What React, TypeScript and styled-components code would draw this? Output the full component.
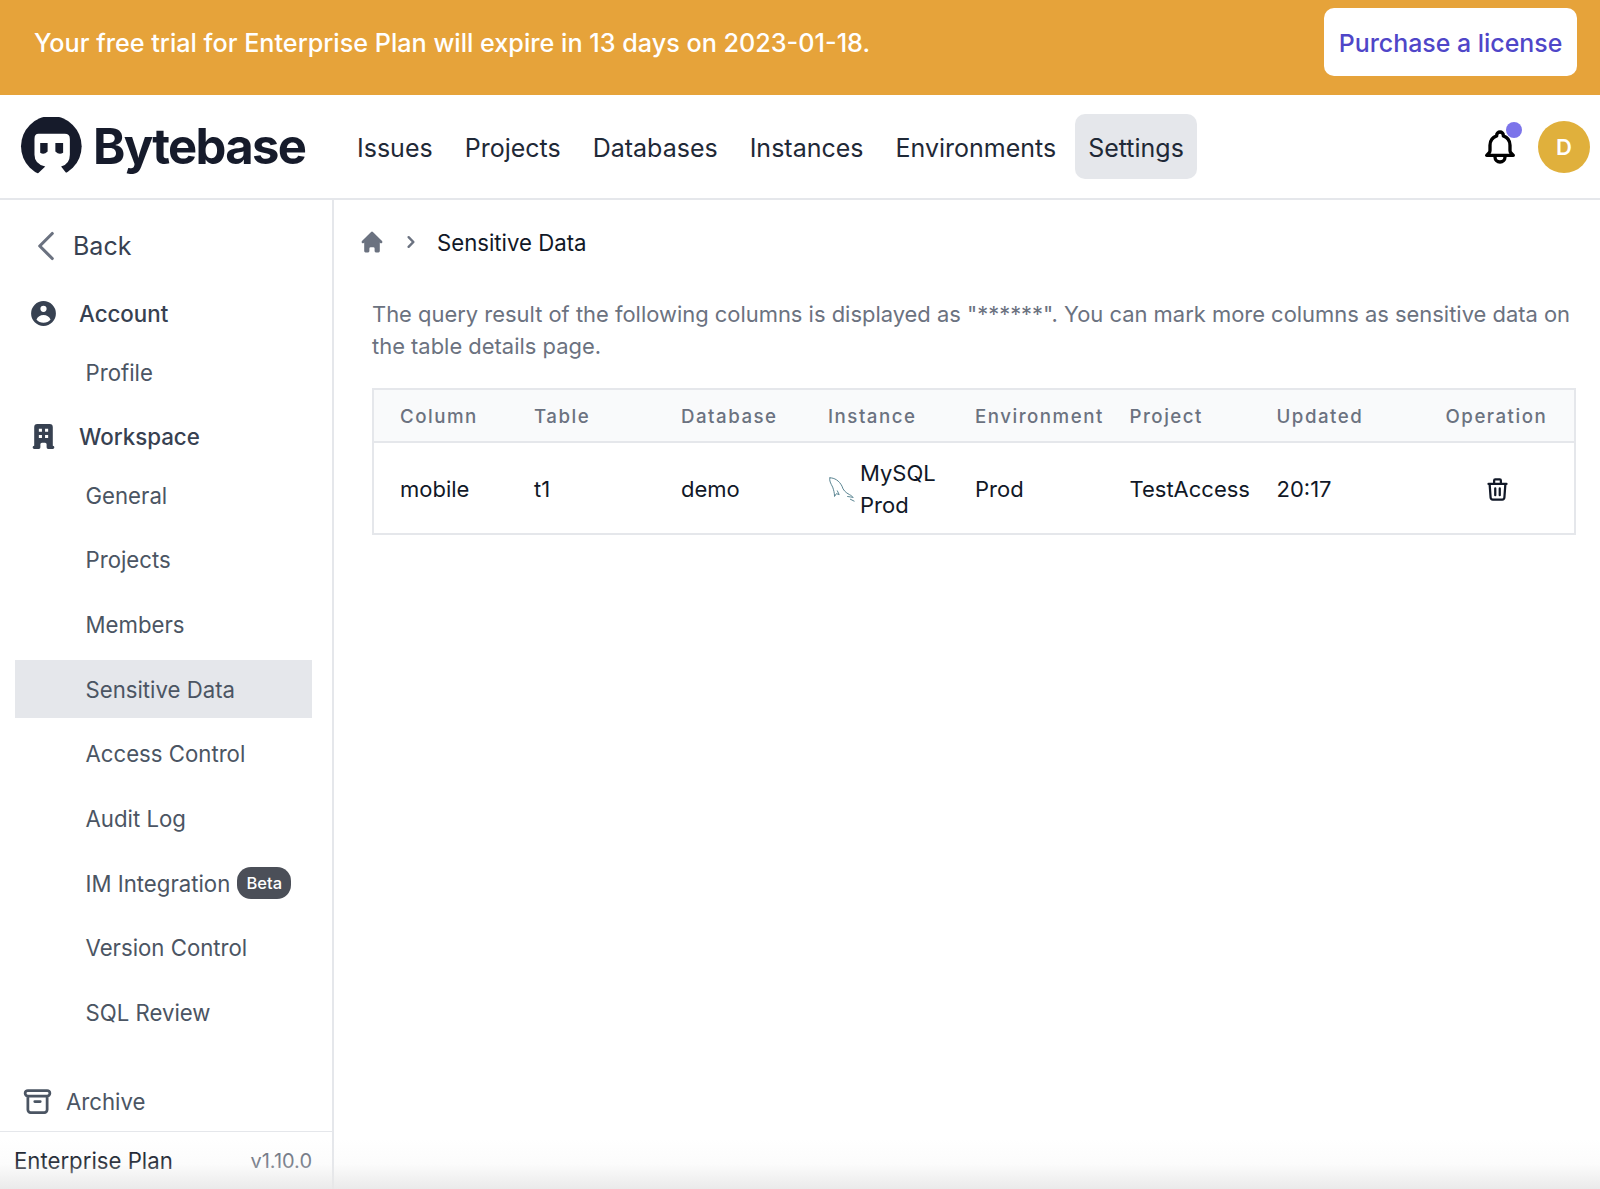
import React from 'react';
import styled, { createGlobalStyle } from 'styled-components';
import { ChevronLeft } from 'lucide-react';
import {
  HiUserCircle,
  HiOfficeBuilding,
  HiHome,
  HiChevronRight,
  HiOutlineBell,
  HiOutlineTrash,
  HiOutlineArchive,
} from 'react-icons/hi';

const navItems = ['Issues', 'Projects', 'Databases', 'Instances', 'Environments', 'Settings'];
const workspaceItems = ['General', 'Projects', 'Members', 'Sensitive Data', 'Access Control', 'Audit Log', 'IM Integration', 'Version Control', 'SQL Review'];
const columns = ['Column', 'Table', 'Database', 'Instance', 'Environment', 'Project', 'Updated', 'Operation'];

const App: React.FC = () => {
  return (
    <Page>
      <GlobalStyle />
      <Banner>
        <BannerText>Your free trial for Enterprise Plan will expire in 13 days on 2023-01-18.</BannerText>
        <PurchaseButton>Purchase a license</PurchaseButton>
      </Banner>
      <Header>
        <Logo>
          <svg width="64" height="60" viewBox="60 78 190 178">
            <circle cx="153" cy="165" r="90" fill="#161b2b" />
            <path d="M115 128H193Q208 128 208 143V190Q208 218 182 225L208 258H100L135 225Q103 218 103 190V143Q103 128 115 128Z" fill="#fff" />
            <path d="M120 155H142V180Q131 192 120 184Z" fill="#161b2b" />
            <path d="M165 155H188V184Q176 192 165 180Z" fill="#161b2b" />
          </svg>
          <LogoText>Bytebase</LogoText>
        </Logo>
        <Nav>
          {navItems.map((item) => (
            <NavItem key={item} $active={item === 'Settings'}>{item}</NavItem>
          ))}
        </Nav>
        <HeaderRight>
          <BellWrap>
            <HiOutlineBell size={40} />
            <BellDot />
          </BellWrap>
          <Avatar>D</Avatar>
        </HeaderRight>
      </Header>
      <Body>
        <Sidebar>
          <BackRow>
            <ChevronLeft size={50} color="#6b7280" strokeWidth={1.5} />
            <span>Back</span>
          </BackRow>
          <GroupRow $top={21}>
            <HiUserCircle size={31} color="#374151" />
            <span>Account</span>
          </GroupRow>
          <SubList $top={7}>
            <SubItem>Profile</SubItem>
          </SubList>
          <GroupRow $top={12}>
            <HiOfficeBuilding size={31} color="#374151" />
            <span>Workspace</span>
          </GroupRow>
          <SubList $top={7}>
            {workspaceItems.map((item) => (
              <SubItem key={item} $active={item === 'Sensitive Data'}>
                {item}
                {item === 'IM Integration' && <BetaBadge>Beta</BetaBadge>}
              </SubItem>
            ))}
          </SubList>
          <ArchiveRow>
            <HiOutlineArchive size={33} color="#4b5563" />
            <span>Archive</span>
          </ArchiveRow>
          <SidebarFooter>
            <PlanName>Enterprise Plan</PlanName>
            <Version>v1.10.0</Version>
          </SidebarFooter>
        </Sidebar>
        <Main>
          <Breadcrumb>
            <HiHome size={26} color="#6b7280" />
            <HiChevronRight size={24} color="#6b7280" />
            <Crumb>Sensitive Data</Crumb>
          </Breadcrumb>
          <Description>
            The query result of the following columns is displayed as "******". You can mark more columns as sensitive data on the table details page.
          </Description>
          <DataTable>
            <HeadRow>
              {columns.map((column) => (
                <HeadCell key={column}>{column}</HeadCell>
              ))}
            </HeadRow>
            <BodyRow>
              <BodyCell>mobile</BodyCell>
              <BodyCell>t1</BodyCell>
              <BodyCell>demo</BodyCell>
              <InstanceCell>
                <svg width="28" height="28" viewBox="0 0 30 28" fill="none" stroke="#4f7c8a" strokeWidth="1" strokeLinecap="round" strokeLinejoin="round">
                  <path d="M2 2C7 2 12 5 15 11C16 15 19 18 23 20C25 21 26 22 27 23C25 23 23 22 21 22" />
                  <path d="M2 2C1 5 3 8 5 12C6 15 7 18 7 22L9 19L12 20L10 16" />
                  <path d="M24 25L28 27" />
                </svg>
                <span>MySQL<br />Prod</span>
              </InstanceCell>
              <BodyCell>Prod</BodyCell>
              <BodyCell>TestAccess</BodyCell>
              <BodyCell>20:17</BodyCell>
              <TrashCell>
                <HiOutlineTrash size={27} color="#111827" />
              </TrashCell>
            </BodyRow>
          </DataTable>
        </Main>
      </Body>
      <BottomFade />
    </Page>
  );
};

export default App;

const GlobalStyle = createGlobalStyle`
  html, body {
    margin: 0;
    padding: 0;
    background: #fff;
    font-family: Inter, "Liberation Sans", sans-serif;
  }
`;

const Page = styled.div`
  position: relative;
  display: flex;
  flex-direction: column;
  width: 1600px;
  height: 1189px;
  overflow: hidden;
`;

const Banner = styled.div`
  display: flex;
  align-items: center;
  justify-content: space-between;
  box-sizing: border-box;
  height: 95px;
  padding: 0 23px 11px 34px;
  background: #e6a33a;
`;

const BannerText = styled.div`
  margin-top: 2px;
  color: #fff;
  font-size: 25.2px;
  font-weight: 500;
`;

const PurchaseButton = styled.div`
  display: flex;
  align-items: center;
  justify-content: center;
  box-sizing: border-box;
  width: 253px;
  height: 68px;
  padding-top: 2px;
  border-radius: 10px;
  background: #fff;
  color: #4f46c8;
  font-size: 24.9px;
  font-weight: 500;
`;

const Header = styled.div`
  display: flex;
  align-items: center;
  box-sizing: border-box;
  height: 105px;
  padding: 0 10px 0 20px;
  border-bottom: 2px solid #e5e7eb;
`;

const Logo = styled.div`
  display: flex;
  align-items: center;
  gap: 9px;
  width: 323.5px;
`;

const LogoText = styled.span`
  color: #161b2b;
  font-size: 49px;
  font-weight: 700;
  letter-spacing: -1.7px;
`;

const Nav = styled.nav`
  display: flex;
  gap: 5px;
`;

const NavItem = styled.div<{ $active?: boolean }>`
  display: flex;
  align-items: center;
  box-sizing: border-box;
  height: 65px;
  padding: 2px 13.5px 0;
  border-radius: 10px;
  background: ${(p) => (p.$active ? '#e5e7eb' : 'transparent')};
  color: #1f2937;
  font-size: 25px;
`;

const HeaderRight = styled.div`
  display: flex;
  align-items: center;
  gap: 18px;
  margin-left: auto;
`;

const BellWrap = styled.div`
  position: relative;
  display: flex;
  color: #000;
`;

const BellDot = styled.span`
  position: absolute;
  top: -5px;
  right: -2px;
  width: 16px;
  height: 16px;
  border-radius: 50%;
  background: #7c74ea;
`;

const Avatar = styled.div`
  display: flex;
  align-items: center;
  justify-content: center;
  width: 52px;
  height: 52px;
  border-radius: 50%;
  background: #e0b03c;
  color: #fff;
  font-size: 22px;
  font-weight: 600;
`;

const Body = styled.div`
  display: flex;
  flex: 1;
  min-height: 0;
`;

const Sidebar = styled.aside`
  display: flex;
  flex-direction: column;
  box-sizing: border-box;
  width: 334px;
  padding-top: 23px;
  border-right: 2px solid #e5e7eb;
`;

const BackRow = styled.div`
  display: flex;
  align-items: center;
  gap: 2px;
  height: 46px;
  padding-left: 21px;
  color: #374151;
  font-size: 25px;
`;

const GroupRow = styled.div<{ $top: number }>`
  display: flex;
  align-items: center;
  gap: 20px;
  height: 46px;
  margin-top: ${(p) => p.$top}px;
  padding-left: 28px;
  color: #374151;
  font-size: 22.3px;
  font-weight: 500;
`;

const SubList = styled.div<{ $top: number }>`
  display: flex;
  flex-direction: column;
  gap: 6.7px;
  margin-top: ${(p) => p.$top}px;
`;

const SubItem = styled.div<{ $active?: boolean }>`
  display: flex;
  align-items: center;
  gap: 7px;
  box-sizing: border-box;
  width: 297px;
  height: 58px;
  margin-left: 15px;
  padding-left: 70.5px;
  background: ${(p) => (p.$active ? '#e5e7eb' : 'transparent')};
  color: #4b5563;
  font-size: 22.2px;
`;

const BetaBadge = styled.span`
  display: flex;
  align-items: center;
  justify-content: center;
  width: 54px;
  height: 32px;
  border-radius: 14px;
  background: #4b4f58;
  color: #fff;
  font-size: 16.5px;
  font-weight: 500;
`;

const ArchiveRow = styled.div`
  display: flex;
  align-items: center;
  gap: 12px;
  height: 46px;
  margin-top: auto;
  margin-bottom: 7px;
  padding-left: 21px;
  color: #4b5563;
  font-size: 22.2px;
`;

const SidebarFooter = styled.div`
  display: flex;
  align-items: center;
  justify-content: space-between;
  box-sizing: border-box;
  height: 58px;
  padding: 0 20px 0 14px;
  border-top: 1px solid #e5e7eb;
`;

const PlanName = styled.span`
  color: #111827;
  font-size: 22.2px;
`;

const Version = styled.span`
  color: #6b7280;
  font-size: 20px;
`;

const Main = styled.main`
  flex: 1;
  min-width: 0;
  padding: 0 24px 0 38px;
`;

const Breadcrumb = styled.div`
  display: flex;
  align-items: center;
  gap: 14px;
  height: 46px;
  margin: 19px 0 0 -13px;
`;

const Crumb = styled.span`
  color: #111827;
  font-size: 22.2px;
`;

const Description = styled.p`
  margin: 33px 0 0;
  color: #6b7280;
  font-size: 21.93px;
  line-height: 32px;
`;

const tableColumns = '134px 147px 147px 147px 154.5px 147px 169px 155px';

const DataTable = styled.div`
  margin-top: 26px;
  border: 2px solid #e5e7eb;
`;

const HeadRow = styled.div`
  display: grid;
  grid-template-columns: ${tableColumns};
  align-items: center;
  box-sizing: content-box;
  height: 49px;
  padding-top: 2px;
  background: #f9fafb;
  border-bottom: 2px solid #e5e7eb;
`;

const HeadCell = styled.div`
  padding-left: 26px;
  color: #6b7280;
  font-size: 18.7px;
  font-weight: 500;
  letter-spacing: 1.5px;
  white-space: nowrap;
`;

const BodyRow = styled.div`
  display: grid;
  grid-template-columns: ${tableColumns};
  align-items: center;
  box-sizing: border-box;
  height: 90px;
  padding-top: 2px;
`;

const BodyCell = styled.div`
  padding-left: 26px;
  color: #111827;
  font-size: 22px;
  white-space: nowrap;
`;

const InstanceCell = styled(BodyCell)`
  display: flex;
  align-items: center;
  gap: 4px;
  line-height: 32px;
`;

const TrashCell = styled.div`
  display: flex;
  justify-content: center;
`;

const BottomFade = styled.div`
  position: absolute;
  left: 0;
  right: 0;
  bottom: 0;
  height: 50px;
  background: linear-gradient(to bottom, rgba(232, 232, 232, 0), rgba(232, 232, 232, 0.15) 50%, rgba(232, 232, 232, 0.9));
  pointer-events: none;
`;
